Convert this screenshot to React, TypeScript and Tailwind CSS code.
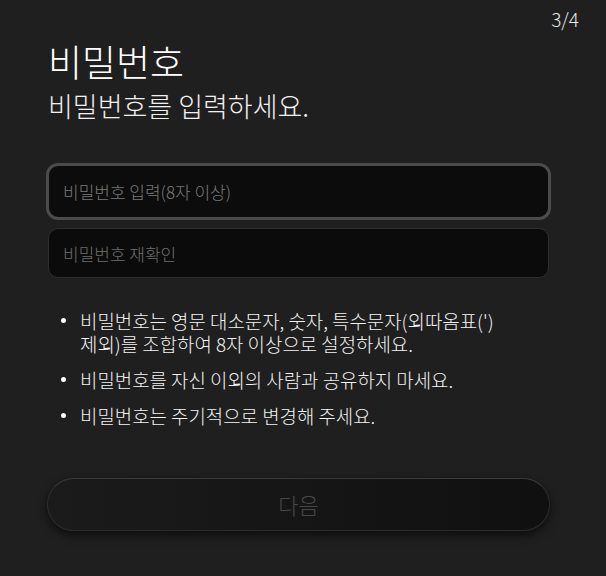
import { useState } from "react"

export default function App() {
  const [pw, setPw] = useState("")
  const [pw2, setPw2] = useState("")

  return (
    <div
      className="relative h-[576px] w-[606px] overflow-hidden bg-[#1f1f1f] text-white"
      style={{ fontFamily: '"Noto Sans CJK KR", "Noto Sans", sans-serif' }}
    >
      <div className="absolute right-[27px] top-[5px] text-[19px] font-light text-[#e6e6e6]">3/4</div>

      <div className="px-[48px] pt-[35px]">
        <h1 className="text-[37px] font-light leading-[52px] text-white">비밀번호</h1>
        <p className="mt-[1px] text-[27px] font-light leading-[36px] text-[#f0f0f0]">비밀번호를 입력하세요.</p>

        <div className="mt-[39px] flex flex-col gap-[8px]">
          <input
            type="password"
            autoFocus
            value={pw}
            onChange={(e) => setPw(e.target.value)}
            placeholder="비밀번호 입력(8자 이상)"
            className="h-[57px] w-[505px] -ml-[2px] rounded-[12px] border-[3px] border-[#4b4b4b] bg-[#0c0c0c] px-[14px] text-[17px] font-light text-white outline-none placeholder:text-[#7a7a7a] caret-white"
          />
          <input
            type="password"
            value={pw2}
            onChange={(e) => setPw2(e.target.value)}
            placeholder="비밀번호 재확인"
            className="h-[50px] w-[501px] rounded-[10px] border border-[#2e2e2e] bg-[#0b0b0b] px-[14px] text-[17px] font-light text-white outline-none placeholder:text-[#6e6e6e]"
          />
        </div>

        <ul className="mt-[31px] flex flex-col gap-[13px] pl-[13px] text-[18.9px] font-light leading-[23px] text-[#f2f2f2]">
          <li className="flex gap-[14px]">
            <span className="mt-[9px] h-[5px] w-[5px] shrink-0 rounded-full bg-white" />
            <span>비밀번호는 영문 대소문자, 숫자, 특수문자(외따옴표(')<br />제외)를 조합하여 8자 이상으로 설정하세요.</span>
          </li>
          <li className="flex gap-[14px]">
            <span className="mt-[9px] h-[5px] w-[5px] shrink-0 rounded-full bg-white" />
            <span>비밀번호를 자신 이외의 사람과 공유하지 마세요.</span>
          </li>
          <li className="flex gap-[14px]">
            <span className="mt-[9px] h-[5px] w-[5px] shrink-0 rounded-full bg-white" />
            <span>비밀번호는 주기적으로 변경해 주세요.</span>
          </li>
        </ul>

        <button
          disabled
          className="mt-[51px] -ml-[1px] h-[53px] w-[503px] rounded-full border border-[#2c2c2c] border-t-[#3a3a3a] bg-gradient-to-r from-[#1b1b1b] to-[#101010] text-[22px] font-light text-[#474747] shadow-[0_4px_10px_rgba(0,0,0,0.6)]"
        >
          다음
        </button>
      </div>
    </div>
  )
}
